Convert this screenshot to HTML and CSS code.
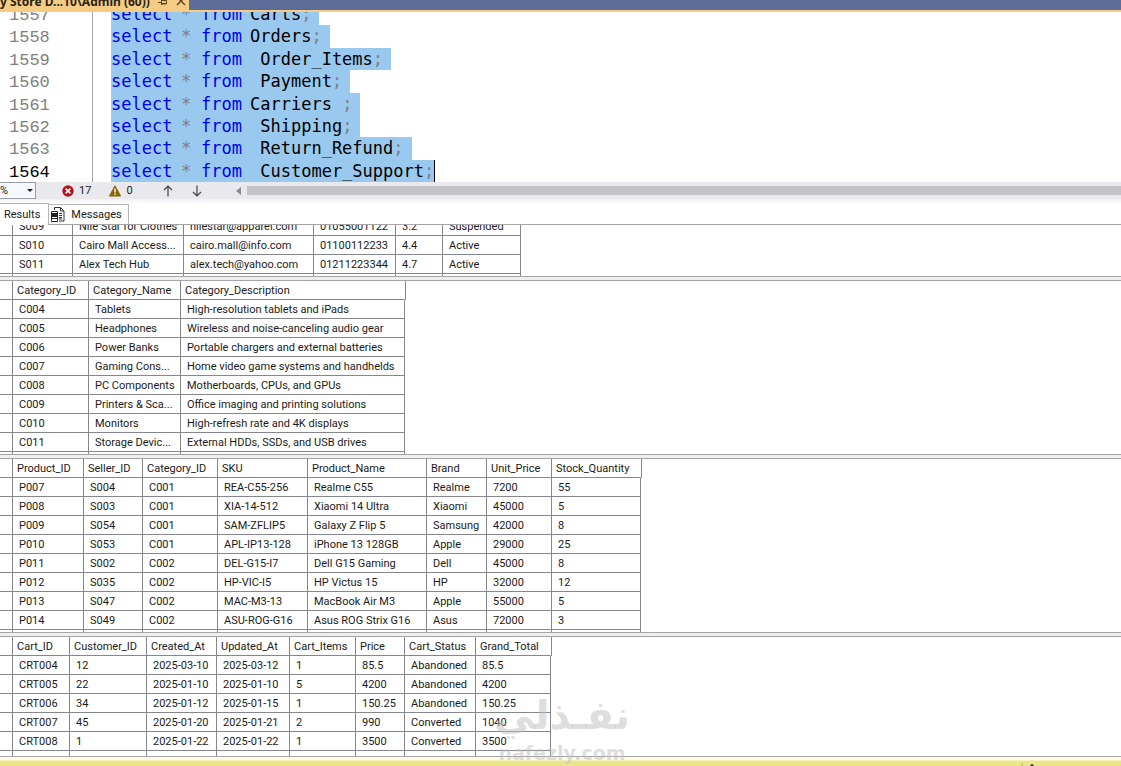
FILE: index.html
```
<!DOCTYPE html>
<html lang="en">
  <head>
    <meta charset="UTF-8">
    <title>Store Database - Query</title>
    <link rel="stylesheet" href="styles.css">
  </head>
  <body>
    <header class="doc-tabs">
      <div class="doc-tab">
        <span>y Store D...10\Admin (60))</span>
        <button type="button" class="icon-button" aria-label="Pin tab">
          <svg width="10" height="8" viewBox="0 0 10 8"><path d="M0 2.500h3M3.500 0v5M3.500 .5h5v3h-5M3.500 4h5" fill="none" stroke="#5a4520"/></svg>
        </button>
        <button type="button" class="icon-button" aria-label="Close tab">
          <svg width="10" height="8" viewBox="0 0 10 8"><path d="M1-3l8 8M9-3L1 5" fill="none" stroke="#5a4520" stroke-width="1.4"/></svg>
        </button>
      </div>
    </header>

    <main class="editor">
      <div class="code">
        <div class="line"><span class="num">1557</span><span class="sql"><b>select</b><i>*</i><b>from</b><span>Carts<i>;</i></span></span></div>
        <div class="line"><span class="num">1558</span><span class="sql"><b>select</b><i>*</i><b>from</b><span>Orders<i>;</i></span></span></div>
        <div class="line"><span class="num">1559</span><span class="sql"><b>select</b><i>*</i><b>from</b><span> Order_Items<i>;</i></span></span></div>
        <div class="line"><span class="num">1560</span><span class="sql"><b>select</b><i>*</i><b>from</b><span> Payment<i>;</i></span></span></div>
        <div class="line"><span class="num">1561</span><span class="sql"><b>select</b><i>*</i><b>from</b><span>Carriers <i>;</i></span></span></div>
        <div class="line"><span class="num">1562</span><span class="sql"><b>select</b><i>*</i><b>from</b><span> Shipping<i>;</i></span></span></div>
        <div class="line"><span class="num">1563</span><span class="sql"><b>select</b><i>*</i><b>from</b><span> Return_Refund<i>;</i></span></span></div>
        <div class="line current"><span class="num">1564</span><span class="sql"><b>select</b><i>*</i><b>from</b><span> Customer_Support<i>;</i></span></span></div>
      </div>
    </main>

    <div class="editor-bar">
      <div class="zoom">
        <select aria-label="Zoom"><option>%</option></select>
      </div>
      <div class="counter errors">
        <svg width="12" height="12" viewBox="0 0 12 12"><circle cx="6" cy="6" r="5.7" fill="#b5121f"/><path d="M3.6 3.6l4.8 4.8M8.4 3.6L3.6 8.4" stroke="#fff" stroke-width="1.5"/></svg>
        <span>17</span>
      </div>
      <div class="counter warnings">
        <svg width="12" height="12" viewBox="0 0 12 12"><path d="M6 .8L11.6 11H.4z" fill="#8a6500" stroke="#8a6500" stroke-linejoin="round"/><path d="M6 3.6v4M6 8.6v1.5" stroke="#fff" stroke-width="1.4"/></svg>
        <span>0</span>
      </div>
      <button type="button" class="icon-button arrow-up" aria-label="Previous issue">
        <svg width="10" height="12" viewBox="0 0 10 12"><path d="M5 11.5V1M1 5l4-4 4 4" fill="none" stroke="#444" stroke-width="1.2"/></svg>
      </button>
      <button type="button" class="icon-button arrow-down" aria-label="Next issue">
        <svg width="10" height="12" viewBox="0 0 10 12"><path d="M5 .5V11M1 7l4 4 4-4" fill="none" stroke="#444" stroke-width="1.2"/></svg>
      </button>
      <button type="button" class="icon-button scroll-left" aria-label="Scroll left">
        <svg width="6" height="8" viewBox="0 0 6 8"><path d="M5 0v8L0 4z" fill="#868999"/></svg>
      </button>
      <div class="scroll-thumb"></div>
    </div>

    <nav class="result-tabs">
      <button type="button" class="result-tab active">Results</button>
      <button type="button" class="result-tab">
        <svg width="14" height="15" viewBox="0 0 14 15"><path d="M3.500 3V.5h6l3.500 3.500v10H8M9.500.5V4H13M8 6.500h3M8 8.500h3M8 10.500h3M8 12h3" fill="none" stroke="#333"/><path d="M.5 4.500h6v10h-6z" fill="#fff" stroke="#222"/><path d="M1 6h5v4H1zM1 11h5v1H1z" fill="#222"/></svg>
        <span>Messages</span>
      </button>
    </nav>

    <section class="pane sellers">
      <table class="grid">
        <colgroup><col class="w13"><col class="w60"><col class="w111"><col class="w130"><col class="w82"><col class="w47"><col class="w78"></colgroup>
        <tbody>
          <tr><td></td><td>S009</td><td>Nile Star for Clothes</td><td>nilestar@apparel.com</td><td>01055001122</td><td>3.2</td><td>Suspended</td></tr>
          <tr><td></td><td>S010</td><td>Cairo Mall Access...</td><td>cairo.mall@info.com</td><td>01100112233</td><td>4.4</td><td>Active</td></tr>
          <tr><td></td><td>S011</td><td>Alex Tech Hub</td><td>alex.tech@yahoo.com</td><td>01211223344</td><td>4.7</td><td>Active</td></tr>
          <tr><td></td><td></td><td></td><td></td><td></td><td></td><td></td></tr>
        </tbody>
      </table>
    </section>
    <div class="splitter"></div>

    <section class="pane categories">
      <table class="grid">
        <colgroup><col class="w13"><col class="w76"><col class="w92"><col class="w224"></colgroup>
        <thead>
          <tr><th></th><th>Category_ID</th><th>Category_Name</th><th>Category_Description</th></tr>
        </thead>
        <tbody>
          <tr><td></td><td>C004</td><td>Tablets</td><td>High-resolution tablets and iPads</td></tr>
          <tr><td></td><td>C005</td><td>Headphones</td><td>Wireless and noise-canceling audio gear</td></tr>
          <tr><td></td><td>C006</td><td>Power Banks</td><td>Portable chargers and external batteries</td></tr>
          <tr><td></td><td>C007</td><td>Gaming Cons...</td><td>Home video game systems and handhelds</td></tr>
          <tr><td></td><td>C008</td><td>PC Components</td><td>Motherboards, CPUs, and GPUs</td></tr>
          <tr><td></td><td>C009</td><td>Printers &amp; Sca...</td><td>Office imaging and printing solutions</td></tr>
          <tr><td></td><td>C010</td><td>Monitors</td><td>High-refresh rate and 4K displays</td></tr>
          <tr><td></td><td>C011</td><td>Storage Devic...</td><td>External HDDs, SSDs, and USB drives</td></tr>
          <tr><td></td><td></td><td></td><td></td></tr>
        </tbody>
      </table>
    </section>
    <div class="splitter"></div>

    <section class="pane products">
      <table class="grid">
        <colgroup><col class="w13"><col class="w71"><col class="w59"><col class="w75"><col class="w90"><col class="w119"><col class="w60"><col class="w65"><col class="w89"></colgroup>
        <thead>
          <tr><th></th><th>Product_ID</th><th>Seller_ID</th><th>Category_ID</th><th>SKU</th><th>Product_Name</th><th>Brand</th><th>Unit_Price</th><th>Stock_Quantity</th></tr>
        </thead>
        <tbody>
          <tr><td></td><td>P007</td><td>S004</td><td>C001</td><td>REA-C55-256</td><td>Realme C55</td><td>Realme</td><td>7200</td><td>55</td></tr>
          <tr><td></td><td>P008</td><td>S003</td><td>C001</td><td>XIA-14-512</td><td>Xiaomi 14 Ultra</td><td>Xiaomi</td><td>45000</td><td>5</td></tr>
          <tr><td></td><td>P009</td><td>S054</td><td>C001</td><td>SAM-ZFLIP5</td><td>Galaxy Z Flip 5</td><td>Samsung</td><td>42000</td><td>8</td></tr>
          <tr><td></td><td>P010</td><td>S053</td><td>C001</td><td>APL-IP13-128</td><td>iPhone 13 128GB</td><td>Apple</td><td>29000</td><td>25</td></tr>
          <tr><td></td><td>P011</td><td>S002</td><td>C002</td><td>DEL-G15-I7</td><td>Dell G15 Gaming</td><td>Dell</td><td>45000</td><td>8</td></tr>
          <tr><td></td><td>P012</td><td>S035</td><td>C002</td><td>HP-VIC-I5</td><td>HP Victus 15</td><td>HP</td><td>32000</td><td>12</td></tr>
          <tr><td></td><td>P013</td><td>S047</td><td>C002</td><td>MAC-M3-13</td><td>MacBook Air M3</td><td>Apple</td><td>55000</td><td>5</td></tr>
          <tr><td></td><td>P014</td><td>S049</td><td>C002</td><td>ASU-ROG-G16</td><td>Asus ROG Strix G16</td><td>Asus</td><td>72000</td><td>3</td></tr>
          <tr><td></td><td></td><td></td><td></td><td></td><td></td><td></td><td></td><td></td></tr>
        </tbody>
      </table>
    </section>
    <div class="splitter"></div>

    <section class="pane carts">
      <table class="grid">
        <colgroup><col class="w13"><col class="w57"><col class="w77"><col class="w70"><col class="w73"><col class="w66"><col class="w49"><col class="w71"><col class="w75"></colgroup>
        <thead>
          <tr><th></th><th>Cart_ID</th><th>Customer_ID</th><th>Created_At</th><th>Updated_At</th><th>Cart_Items</th><th>Price</th><th>Cart_Status</th><th>Grand_Total</th></tr>
        </thead>
        <tbody>
          <tr><td></td><td>CRT004</td><td>12</td><td>2025-03-10</td><td>2025-03-12</td><td>1</td><td>85.5</td><td>Abandoned</td><td>85.5</td></tr>
          <tr><td></td><td>CRT005</td><td>22</td><td>2025-01-10</td><td>2025-01-10</td><td>5</td><td>4200</td><td>Abandoned</td><td>4200</td></tr>
          <tr><td></td><td>CRT006</td><td>34</td><td>2025-01-12</td><td>2025-01-15</td><td>1</td><td>150.25</td><td>Abandoned</td><td>150.25</td></tr>
          <tr><td></td><td>CRT007</td><td>45</td><td>2025-01-20</td><td>2025-01-21</td><td>2</td><td>990</td><td>Converted</td><td>1040</td></tr>
          <tr><td></td><td>CRT008</td><td>1</td><td>2025-01-22</td><td>2025-01-22</td><td>1</td><td>3500</td><td>Converted</td><td>3500</td></tr>
          <tr><td></td><td></td><td></td><td></td><td></td><td></td><td></td><td></td><td></td></tr>
        </tbody>
      </table>
    </section>

    <footer class="status-bar">
      <svg width="16" height="3" viewBox="0 0 16 3"><path d="M1 0v3" stroke="#b5ae6c"/><path d="M9 3q2-4 4 0z" fill="#333"/></svg>
    </footer>

    <div class="watermark">
      <span class="watermark-name" lang="ar" dir="rtl">نفـذلي</span>
      <span class="watermark-site">nafezly.com</span>
    </div>
  </body>
</html>
```
FILE: styles.css
```
* {
  box-sizing: border-box;
}
body {
  margin: 0;
  height: 100vh;
  display: flex;
  flex-direction: column;
  position: relative;
  overflow: hidden;
  background: #fff;
  color: #1a1a1a;
  font-family: Roboto, "Liberation Sans", sans-serif;
  font-size: 11px;
}
button, select {
  font: inherit;
  color: inherit;
}
svg {
  display: block;
}
.icon-button {
  padding: 0;
  border: none;
  background: none;
}

/* document tabs */
.doc-tabs {
  flex: none;
  height: 12px;
  display: flex;
  background: #5d6b99;
  border-bottom: 2px solid #f5cc84;
}
.doc-tab {
  display: flex;
  align-items: flex-start;
  gap: 8px;
  padding-right: 3px;
  background: #f5cc84;
  font: bold 12px/4px "Noto Sans", sans-serif;
  color: #2b2313;
}

/* editor */
.editor {
  flex: none;
  height: 170px;
  display: flex;
  flex-direction: column;
  justify-content: flex-end;
  overflow: hidden;
  font-family: "DejaVu Sans Mono", monospace;
  font-size: 17px;
}
.code {
  flex: none;
  height: 179px;
  display: grid;
  grid-template-rows: repeat(8, minmax(0, 1fr));
  line-height: 22px;
}
.line {
  display: flex;
}
.num {
  width: 93px;
  margin-right: 18px;
  padding-left: 9px;
  border-right: 1px solid #a5a5a5;
  color: #808080;
  font-family: "Liberation Mono", monospace;
  line-height: 25px;
}
.sql {
  display: grid;
  grid-template-columns: 70px 20px 49px auto;
  padding-right: 8px;
  background: #99c9ef;
  color: #000;
  white-space: pre;
}
.sql b {
  color: #0000f0;
  font-weight: normal;
}
.sql i {
  color: #808080;
  font-style: normal;
}
.line > span {
  height: 100%;
}
.current .num {
  color: #000;
}
.current .sql {
  padding-right: 0;
  border-right: 1px solid #000;
}

/* bar under the editor */
.editor-bar {
  flex: none;
  height: 17px;
  display: flex;
  align-items: center;
  background: #e9e8ed;
}
.zoom {
  position: relative;
  width: 36px;
  height: 17px;
}
.zoom select {
  width: 100%;
  height: 100%;
  padding: 0;
  border: 1px solid #9a9eab;
  border-left: none;
  border-radius: 0;
  background: #f6f8fe;
  appearance: none;
}
.zoom::after {
  content: "";
  position: absolute;
  right: 3px;
  top: 7px;
  border: 3px solid transparent;
  border-top-color: #222;
  pointer-events: none;
}
.counter {
  display: flex;
  align-items: center;
  gap: 5px;
}
.errors {
  margin-left: 26px;
}
.warnings {
  margin-left: 18px;
}
.arrow-up {
  margin-left: 30px;
}
.arrow-down {
  margin-left: 19px;
}
.scroll-left {
  margin-left: 34px;
}
.scroll-thumb {
  flex: 1;
  height: 9px;
  margin-left: 5px;
  background: #c3c3c7;
}

/* Results / Messages */
.result-tabs {
  flex: none;
  height: 26px;
  display: flex;
  align-items: flex-end;
  border-bottom: 1px solid #a5a5a8;
  background: linear-gradient(#f1f1f5, #fff 5px);
}
.result-tab {
  height: 20px;
  display: flex;
  align-items: center;
  gap: 6px;
  padding: 0 6px 0 2px;
  border: 1px solid #b5b5b8;
  border-width: 1px 1px 0 0;
  background: #fff;
}
.result-tab.active {
  height: 22px;
  margin-bottom: -1px;
  padding: 0 8px 0 4px;
}

/* result grids */
.pane {
  flex: 173 1 0;
  min-height: 0;
  overflow: hidden;
}
.sellers {
  flex-grow: 51;
}
.sellers .grid {
  margin-top: -8px;
}
.carts {
  flex-grow: 119;
}
.splitter {
  flex: none;
  height: 5px;
  border: 1px solid #a5a5a8;
  border-width: 1px 0;
  background: #efeff1;
}
.grid {
  table-layout: fixed;
  width: 0;
  border-collapse: separate;
  border-spacing: 0;
  line-height: 16px;
}
.grid th,
.grid td {
  height: 19px;
  padding: 2px 0 0 6px;
  border: 1px solid #85878c;
  border-width: 0 1px 1px 0;
  font-weight: normal;
  text-align: left;
  white-space: nowrap;
}
.grid th {
  padding-left: 4px;
}
.grid th:last-child {
  border-right-color: transparent;
  box-shadow: 1px 0 #85878c;
}
.w13 { width: 13px; }
.w47 { width: 47px; }
.w49 { width: 49px; }
.w57 { width: 57px; }
.w59 { width: 59px; }
.w60 { width: 60px; }
.w65 { width: 65px; }
.w66 { width: 66px; }
.w70 { width: 70px; }
.w71 { width: 71px; }
.w73 { width: 73px; }
.w75 { width: 75px; }
.w76 { width: 76px; }
.w77 { width: 77px; }
.w78 { width: 78px; }
.w82 { width: 82px; }
.w89 { width: 89px; }
.w90 { width: 90px; }
.w92 { width: 92px; }
.w111 { width: 111px; }
.w119 { width: 119px; }
.w130 { width: 130px; }
.w224 { width: 224px; }

.status-bar {
  flex: none;
  height: 10px;
  display: flex;
  align-items: flex-end;
  justify-content: flex-end;
  padding-right: 84px;
  border-top: 1px solid #a5a5a8;
  background: linear-gradient(#fffbe6 3px, #ece58c 4px);
}

.watermark {
  position: absolute;
  left: 494px;
  bottom: 2px;
  display: flex;
  flex-direction: column;
  align-items: center;
  color: rgba(190, 190, 192, 0.5);
  pointer-events: none;
}
.watermark-name {
  font: bold 40px/54px "DejaVu Sans", sans-serif;
}
.watermark-site {
  font: bold 19px/22px "DejaVu Sans", sans-serif;
}
```
